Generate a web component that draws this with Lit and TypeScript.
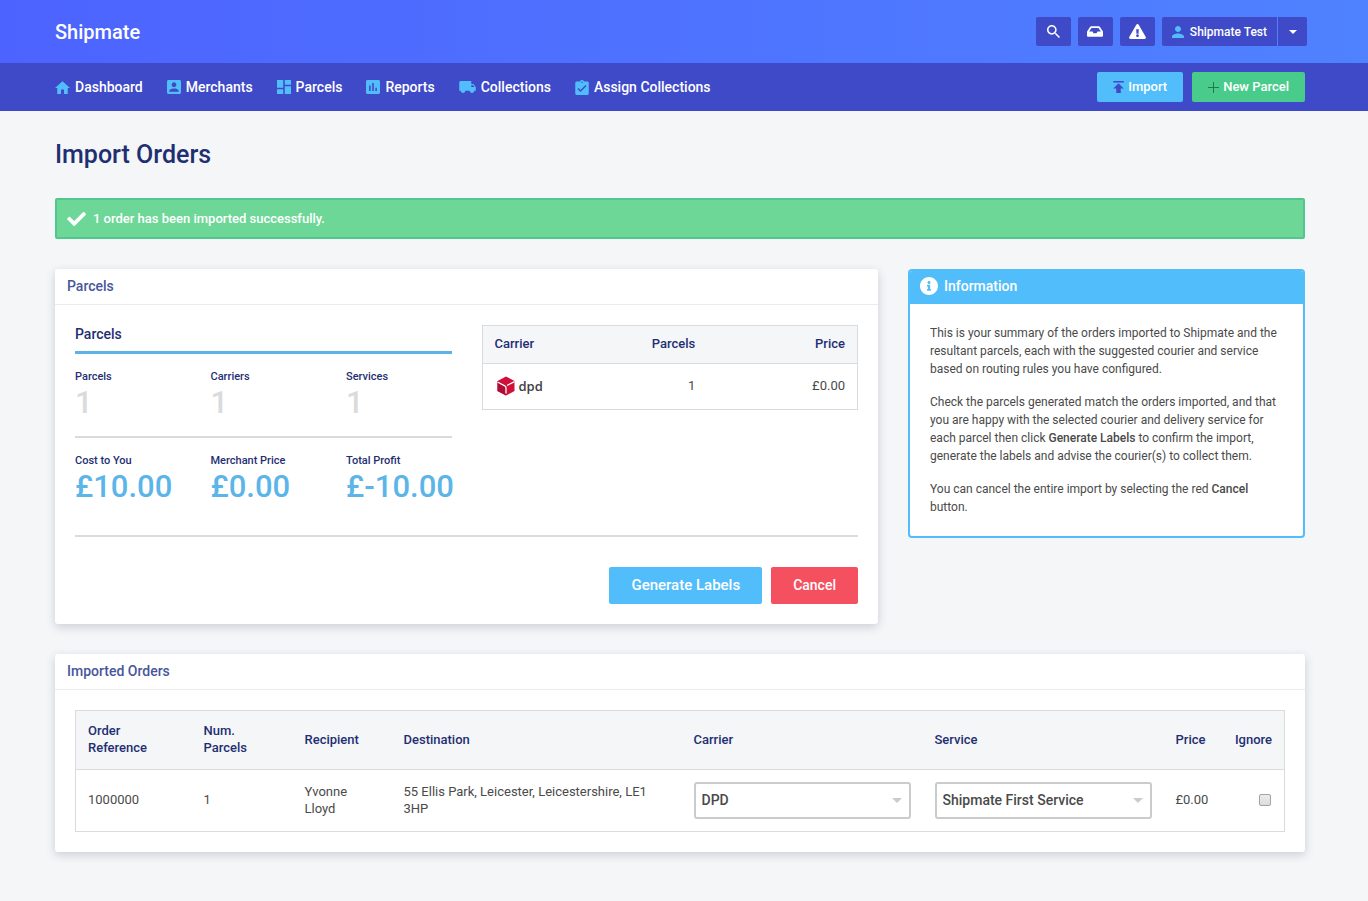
import { LitElement, html, css, svg } from "lit";
import { customElement, property, state } from "lit/decorators.js";

type IconDef = { box: string; w: number; h: number; d: string };

const ICONS: Record<string, IconDef> = {
  search: { box: "3 3 17.5 17.5", w: 13, h: 13, d: "M15.5 14h-.79l-.28-.27C15.41 12.59 16 11.11 16 9.5 16 5.91 13.09 3 9.5 3S3 5.91 3 9.5 5.91 16 9.5 16c1.61 0 3.09-.59 4.23-1.57l.27.28v.79l5 4.99L20.49 19l-4.99-5zm-6 0C7.01 14 5 11.99 5 9.5S7.01 5 9.5 5 14 7.01 14 9.5 11.99 14 9.5 14z" },
  inbox: { box: "0 64 576 384", w: 16, h: 11, d: "M567.938 243.908L462.25 85.374A48.003 48.003 0 0 0 422.311 64H153.689a48 48 0 0 0-39.938 21.374L8.062 243.908A47.994 47.994 0 0 0 0 270.533V400c0 26.51 21.49 48 48 48h480c26.51 0 48-21.49 48-48V270.533a47.994 47.994 0 0 0-8.062-26.625zM162.252 128h251.497l85.333 128H376l-32 64H232l-32-64H76.918l85.334-128z" },
  warning: { box: "0 0 576 512", w: 17, h: 15, d: "M569.517 440.013C587.975 472.007 564.806 512 527.94 512H48.054c-36.937 0-59.999-40.055-41.577-71.987L246.423 23.985c18.467-32.009 64.72-31.951 83.154 0l239.94 416.028zM288 354c-25.405 0-46 20.595-46 46s20.595 46 46 46 46-20.595 46-46-20.595-46-46-46zm-43.673-165.346l7.418 136c.347 6.364 5.609 11.346 11.982 11.346h48.546c6.373 0 11.635-4.982 11.982-11.346l7.418-136c.375-6.874-5.098-12.654-11.982-12.654h-63.383c-6.884 0-12.356 5.78-11.981 12.654z" },
  person: { box: "4 4 16 16", w: 12, h: 12, d: "M12 12c2.21 0 4-1.79 4-4s-1.79-4-4-4-4 1.79-4 4 1.79 4 4 4zm0 2c-2.67 0-8 1.34-8 4v2h16v-2c0-2.66-5.33-4-8-4z" },
  caret: { box: "0 0 8 4", w: 8, h: 4, d: "M0 0h8L4 4z" },
  arrow: { box: "0 0 10 5", w: 10, h: 5, d: "M0 0h10L5 5z" },
  home: { box: "2 3 20 17", w: 15, h: 13, d: "M10 20v-6h4v6h5v-8h3L12 3 2 12h3v8z" },
  merchant: { box: "3 3 18 18", w: 14, h: 14, d: "M3 5v14c0 1.1.89 2 2 2h14c1.1 0 2-.9 2-2V5c0-1.1-.9-2-2-2H5c-1.11 0-2 .9-2 2zm12 4c0 1.66-1.34 3-3 3s-3-1.34-3-3 1.34-3 3-3 3 1.34 3 3zm-9 8c0-2 4-3.1 6-3.1s6 1.1 6 3.1v1H6v-1z" },
  parcels: { box: "3 3 18 18", w: 14, h: 14, d: "M3 13h8V3H3v10zm0 8h8v-6H3v6zm10 0h8V11h-8v10zm0-18v6h8V3h-8z" },
  reports: { box: "3 3 18 18", w: 14, h: 14, d: "M19 3H5c-1.1 0-2 .9-2 2v14c0 1.1.9 2 2 2h14c1.1 0 2-.9 2-2V5c0-1.1-.9-2-2-2zM9 17H7v-7h2v7zm4 0h-2V7h2v10zm4 0h-2v-4h2v4z" },
  truck: { box: "1 4 22 16", w: 17, h: 12, d: "M20 8h-3V4H3c-1.1 0-2 .9-2 2v11h2c0 1.66 1.34 3 3 3s3-1.34 3-3h6c0 1.66 1.34 3 3 3s3-1.34 3-3h2v-5l-3-4zM19.500 9.500l1.96 2.5H17V9.500h2.500z" },
  assign: { box: "3 1 18 20", w: 14, h: 15, d: "M19 3h-4.18C14.4 1.84 13.3 1 12 1c-1.3 0-2.4.84-2.82 2H5c-1.1 0-2 .9-2 2v14c0 1.1.9 2 2 2h14c1.1 0 2-.9 2-2V5c0-1.1-.9-2-2-2zm-7 0c.55 0 1 .45 1 1s-.45 1-1 1-1-.45-1-1 .45-1 1-1zm-2 14l-4-4 1.41-1.41L10 14.17l6.59-6.59L18 9l-8 8z" },
  upload: { box: "5 4 14 16", w: 11, h: 12, d: "M5 4v2h14V4H5zm0 10h4v6h6v-6h4l-7-7-7 7z" },
  plus: { box: "0 0 11 11", w: 11, h: 11, d: "M5 0h1v5h5v1H6v5H5V6H0V5h5z" },
  check: { box: "0 65 512 382", w: 19, h: 14, d: "M173.898 439.404l-166.4-166.4c-9.997-9.997-9.997-26.206 0-36.204l36.203-36.204c9.997-9.998 26.207-9.998 36.204 0L192 312.69 432.095 72.596c9.997-9.997 26.207-9.997 36.204 0l36.203 36.204c9.997 9.997 9.997 26.206 0 36.204l-294.4 294.401c-9.998 9.997-26.207 9.997-36.204-.001z" },
  info: { box: "8 8 496 496", w: 18, h: 18, d: "M256 8C119.043 8 8 119.083 8 256c0 136.997 111.043 248 248 248s248-111.003 248-248C504 119.083 392.957 8 256 8zm0 110c23.196 0 42 18.804 42 42s-18.804 42-42 42-42-18.804-42-42 18.804-42 42-42zm56 254c0 6.627-5.373 12-12 12h-88c-6.627 0-12-5.373-12-12v-24c0-6.627 5.373-12 12-12h12v-64h-12c-6.627 0-12-5.373-12-12v-24c0-6.627 5.373-12 12-12h64c6.627 0 12 5.373 12 12v100h12c6.627 0 12 5.373 12 12v24z" },
};

const icon = (name: string) => {
  const i = ICONS[name];
  return html`<svg class="icon" width=${i.w} height=${i.h} viewBox=${i.box} fill="currentColor" aria-hidden="true">${svg`<path d=${i.d}></path>`}</svg>`;
};

const base = css`
  *,
  *::before,
  *::after {
    box-sizing: border-box;
  }
  .icon {
    display: block;
    flex: none;
  }
  button,
  select {
    font-family: inherit;
    margin: 0;
  }
  button {
    cursor: pointer;
    border: 0;
  }
  a {
    color: inherit;
    text-decoration: none;
  }
`;

const tableStyles = css`
  table {
    width: 100%;
    border-collapse: collapse;
    table-layout: fixed;
    border: 1px solid #d9dbdd;
    font-size: 13px;
    line-height: 17px;
  }
  th,
  td {
    padding: 0 12px 2px;
  }
  th {
    background: #f4f6f8;
    border-bottom: 1px solid #d9dbdd;
    color: #1f2f72;
    font-weight: 500;
    text-align: left;
  }
  td {
    color: #4a4a4a;
  }
  .right {
    text-align: right;
  }
`;

@customElement("top-bar")
class TopBar extends LitElement {
  static styles = [
    base,
    css`
      :host {
        display: block;
        color: #fff;
      }
      .brand-row {
        display: flex;
        align-items: center;
        justify-content: space-between;
        height: 63px;
        padding: 0 61px 0 55px;
        background: linear-gradient(90deg, #4d63ff, #4f82ff);
      }
      .brand {
        font-size: 20px;
        line-height: 28px;
        font-weight: 500;
      }
      .tools {
        display: flex;
        gap: 7px;
      }
      .tool {
        display: flex;
        align-items: center;
        justify-content: center;
        gap: 6px;
        height: 29px;
        min-width: 35px;
        padding: 0;
        border-radius: 2px;
        background: #3e4ac8;
        color: #fff;
        font-size: 12px;
        line-height: 16px;
        font-weight: 500;
      }
      .split {
        display: flex;
        gap: 1px;
      }
      .account {
        padding: 0 10px;
        border-radius: 2px 0 0 2px;
      }
      .account .icon {
        color: #52bdfb;
      }
      .more {
        min-width: 29px;
        border-radius: 0 2px 2px 0;
      }
      .nav-row {
        display: flex;
        align-items: center;
        justify-content: space-between;
        height: 48px;
        padding: 0 63px 0 55px;
        background: #3e4ac8;
      }
      nav {
        display: flex;
        gap: 24px;
      }
      .link {
        display: flex;
        align-items: center;
        gap: 5px;
        font-size: 14px;
        line-height: 20px;
        font-weight: 500;
      }
      .link .icon {
        color: #52bdfb;
      }
      .actions {
        display: flex;
        gap: 9px;
      }
      .action {
        display: flex;
        align-items: center;
        gap: 4px;
        height: 30px;
        padding: 0 16px;
        border-radius: 2px;
        color: #fff;
        font-size: 13px;
        line-height: 18px;
        font-weight: 500;
      }
      .import {
        background: #52bdfb;
      }
      .import .icon {
        color: #3e4ac8;
      }
      .new {
        background: #49cc8b;
      }
      .new .icon {
        color: #217a4d;
      }
    `,
  ];

  private links = [
    ["home", "Dashboard"],
    ["merchant", "Merchants"],
    ["parcels", "Parcels"],
    ["reports", "Reports"],
    ["truck", "Collections"],
    ["assign", "Assign Collections"],
  ];

  render() {
    return html`
      <header>
        <div class="brand-row">
          <a class="brand" href="#">Shipmate</a>
          <div class="tools">
            <button class="tool" aria-label="Search">${icon("search")}</button>
            <button class="tool" aria-label="Inbox">${icon("inbox")}</button>
            <button class="tool" aria-label="Alerts">${icon("warning")}</button>
            <div class="split">
              <button class="tool account">${icon("person")}<span>Shipmate Test</span></button>
              <button class="tool more" aria-label="Account menu">${icon("caret")}</button>
            </div>
          </div>
        </div>
        <div class="nav-row">
          <nav>
            ${this.links.map(([i, label]) => html`<a class="link" href="#">${icon(i)}<span>${label}</span></a>`)}
          </nav>
          <div class="actions">
            <button class="action import">${icon("upload")}<span>Import</span></button>
            <button class="action new">${icon("plus")}<span>New Parcel</span></button>
          </div>
        </div>
      </header>
    `;
  }
}

@customElement("panel-card")
class PanelCard extends LitElement {
  @property() heading = "";

  static styles = [
    base,
    css`
      :host {
        display: block;
        background: #fff;
        border-radius: 3px;
        box-shadow: 0 3px 10px rgba(40, 50, 80, 0.2);
      }
      .head {
        margin: 0;
        padding: 8px 12px 9px;
        border-bottom: 1px solid #e9ebed;
        color: #46579c;
        font-size: 14px;
        line-height: 18px;
        font-weight: 500;
      }
      .body {
        padding: 20px;
      }
    `,
  ];

  render() {
    return html`<h2 class="head">${this.heading}</h2>
      <div class="body"><slot></slot></div>`;
  }
}

@customElement("parcel-summary")
class ParcelSummary extends LitElement {
  static styles = [
    base,
    tableStyles,
    css`
      :host {
        display: block;
      }
      .columns {
        display: grid;
        grid-template-columns: minmax(0, 1fr) minmax(0, 1fr);
        align-items: start;
        gap: 30px;
        padding-bottom: 30px;
        border-bottom: 2px solid #d9dbdd;
      }
      .title {
        margin: 0;
        padding-bottom: 8px;
        border-bottom: 3px solid #5cb3e4;
        color: #1f2f72;
        font-size: 14px;
        line-height: 18px;
        font-weight: 500;
      }
      .stats {
        display: grid;
        grid-template-columns: repeat(3, minmax(0, 1fr));
        gap: 30px;
        margin: 0;
        padding-top: 15px;
      }
      .stats.ruled {
        padding-bottom: 15px;
        border-bottom: 2px solid #d9dbdd;
      }
      .label {
        color: #1f2f72;
        font-size: 11px;
        line-height: 16px;
        font-weight: 500;
      }
      .value {
        margin: 0;
        color: #5cb5e8;
        font-size: 31px;
        line-height: 36px;
        font-weight: 500;
        white-space: nowrap;
      }
      .muted {
        color: #d9dbdd;
      }
      th {
        height: 38px;
      }
      td {
        height: 46px;
      }
      .c-third {
        width: 30%;
      }
      .c-price {
        width: 40%;
      }
      .dpd {
        display: flex;
        align-items: center;
        gap: 4px;
        padding-left: 2px;
        color: #414042;
        font-family: "Open Sans", sans-serif;
        font-size: 13px;
        line-height: 16px;
        font-weight: 600;
      }
      .buttons {
        display: flex;
        justify-content: flex-end;
        gap: 9px;
        padding-top: 30px;
      }
      .btn {
        height: 37px;
        padding: 0 22px 2px;
        border-radius: 2px;
        color: #fff;
        font-size: 15px;
        line-height: 18px;
        font-weight: 500;
      }
      .primary {
        background: #52bdfb;
      }
      .danger {
        background: #f55060;
        font-size: 14px;
      }
    `,
  ];

  private stat(label: string, value: string, muted = false) {
    return html`<div>
      <dt class="label">${label}</dt>
      <dd class="value ${muted ? "muted" : ""}">${value}</dd>
    </div>`;
  }

  render() {
    return html`
      <div class="columns">
        <section>
          <h3 class="title">Parcels</h3>
          <dl class="stats ruled">
            ${this.stat("Parcels", "1", true)} ${this.stat("Carriers", "1", true)} ${this.stat("Services", "1", true)}
          </dl>
          <dl class="stats">
            ${this.stat("Cost to You", "£10.00")} ${this.stat("Merchant Price", "£0.00")}
            ${this.stat("Total Profit", "£-10.00")}
          </dl>
        </section>
        <table>
          <colgroup>
            <col class="c-third" />
            <col class="c-third" />
            <col class="c-price" />
          </colgroup>
          <thead>
            <tr>
              <th scope="col">Carrier</th>
              <th scope="col" class="right">Parcels</th>
              <th scope="col" class="right">Price</th>
            </tr>
          </thead>
          <tbody>
            <tr>
              <td>
                <span class="dpd">
                  <svg class="icon" width="18" height="20" viewBox="0 0 18 20" aria-hidden="true">
                    <path fill="#d0103a" d="M9 .5 17.500 5v10L9 19.500.5 15V5z"></path>
                    <path fill="#b00c34" d="M.5 5 9 9.500v10L.5 15z"></path>
                    <path fill="none" stroke="#fff" stroke-width="1.300" d="M.5 6 7.800 9.900Q9 10.500 9 12v5.500M10.200 9.300 17.500 5.600"></path>
                  </svg>
                  <span>dpd</span>
                </span>
              </td>
              <td class="right">1</td>
              <td class="right">£0.00</td>
            </tr>
          </tbody>
        </table>
      </div>
      <div class="buttons">
        <button class="btn primary">Generate Labels</button>
        <button class="btn danger">Cancel</button>
      </div>
    `;
  }
}

@customElement("info-panel")
class InfoPanel extends LitElement {
  static styles = [
    base,
    css`
      :host {
        display: block;
        border: 2px solid #52bdfb;
        border-radius: 4px;
        background: #fff;
        overflow: hidden;
      }
      .head {
        display: flex;
        align-items: center;
        gap: 6px;
        height: 33px;
        margin: 0;
        padding: 0 10px 3px;
        background: #52bdfb;
        color: #fff;
        font-size: 14px;
        line-height: 18px;
        font-weight: 500;
      }
      .text {
        display: grid;
        gap: 15px;
        padding: 20px;
        color: #4a4a4a;
        font-size: 12px;
        line-height: 18px;
      }
      p {
        margin: 0;
      }
      b {
        font-weight: 500;
      }
    `,
  ];

  render() {
    return html`
      <h2 class="head">${icon("info")}<span>Information</span></h2>
      <div class="text">
        <p>
          This is your summary of the orders imported to Shipmate and the resultant parcels, each with the suggested
          courier and service based on routing rules you have configured.
        </p>
        <p>
          Check the parcels generated match the orders imported, and that you are happy with the selected courier and
          delivery service for each parcel then click <b>Generate Labels</b> to confirm the import, generate the labels
          and advise the courier(s) to collect them.
        </p>
        <p>You can cancel the entire import by selecting the red <b>Cancel</b> button.</p>
      </div>
    `;
  }
}

@customElement("orders-table")
class OrdersTable extends LitElement {
  @state() private ignored = false;

  static styles = [
    base,
    tableStyles,
    css`
      :host {
        display: block;
      }
      th {
        height: 59px;
      }
      td {
        height: 62px;
      }
      .field {
        padding-bottom: 0;
      }
      .c-ref {
        width: 116px;
      }
      .c-num {
        width: 101px;
      }
      .c-name {
        width: 99px;
      }
      .c-select {
        width: 241px;
      }
      .c-price {
        width: 57px;
      }
      .c-ignore {
        width: 64px;
      }
      .picker {
        display: grid;
        grid-template-columns: minmax(0, 1fr) auto;
        align-items: center;
        color: #c9cbcd;
      }
      .picker select {
        grid-area: 1 / 1 / 2 / 3;
        appearance: none;
        width: 100%;
        height: 37px;
        padding: 0 24px 1px 6px;
        border: 2px solid #c9cbcd;
        border-radius: 3px;
        background: #fff;
        color: #4a4a4a;
        font-size: 14px;
        line-height: 18px;
        font-weight: 500;
      }
      .picker .icon {
        grid-area: 1 / 2 / 2 / 3;
        margin-right: 9px;
        pointer-events: none;
        z-index: 1;
      }
      .tick {
        appearance: none;
        display: block;
        width: 12px;
        height: 12px;
        margin: 0 1px 0 auto;
        border: 1px solid #a3a3a3;
        border-radius: 2px;
        background: linear-gradient(#ececec, #dcdcdc);
      }
      .tick:checked {
        background: #52bdfb;
      }
    `,
  ];

  private picker(label: string, options: string[]) {
    return html`<div class="picker">
      <select aria-label=${label}>
        ${options.map((o) => html`<option>${o}</option>`)}
      </select>
      ${icon("arrow")}
    </div>`;
  }

  render() {
    return html`
      <table>
        <colgroup>
          <col class="c-ref" />
          <col class="c-num" />
          <col class="c-name" />
          <col />
          <col class="c-select" />
          <col class="c-select" />
          <col class="c-price" />
          <col class="c-ignore" />
        </colgroup>
        <thead>
          <tr>
            <th scope="col">Order Reference</th>
            <th scope="col">Num. Parcels</th>
            <th scope="col">Recipient</th>
            <th scope="col">Destination</th>
            <th scope="col">Carrier</th>
            <th scope="col">Service</th>
            <th scope="col">Price</th>
            <th scope="col" class="right">Ignore</th>
          </tr>
        </thead>
        <tbody>
          <tr>
            <td>1000000</td>
            <td>1</td>
            <td>Yvonne Lloyd</td>
            <td>55 Ellis Park, Leicester, Leicestershire, LE1 3HP</td>
            <td class="field">${this.picker("Carrier", ["DPD"])}</td>
            <td class="field">${this.picker("Service", ["Shipmate First Service"])}</td>
            <td>£0.00</td>
            <td>
              <input
                class="tick"
                type="checkbox"
                aria-label="Ignore order 1000000"
                .checked=${this.ignored}
                @change=${(e: Event) => (this.ignored = (e.target as HTMLInputElement).checked)}
              />
            </td>
          </tr>
        </tbody>
      </table>
    `;
  }
}

@customElement("app-root")
class AppRoot extends LitElement {
  static styles = [
    base,
    css`
      :host {
        display: block;
        min-height: 100vh;
        background: #f4f6f8;
        font-family: Roboto, "Liberation Sans", sans-serif;
      }
      main {
        padding: 28px 63px 49px 55px;
      }
      h1 {
        margin: 0 0 27px;
        color: #1f2f72;
        font-size: 25px;
        line-height: 32px;
        font-weight: 500;
      }
      .alert {
        display: flex;
        align-items: center;
        gap: 7px;
        height: 41px;
        padding: 0 10px;
        border: 2px solid #52c68c;
        border-radius: 2px;
        background: #6dd797;
        color: #fff;
        font-size: 13px;
        line-height: 18px;
        font-weight: 500;
      }
      .row {
        display: grid;
        grid-template-columns: minmax(0, 823fr) minmax(0, 397fr);
        align-items: start;
        gap: 30px;
        margin: 30px 0;
      }
    `,
  ];

  render() {
    return html`
      <top-bar></top-bar>
      <main>
        <h1>Import Orders</h1>
        <div class="alert" role="status">${icon("check")}<span>1 order has been imported successfully.</span></div>
        <div class="row">
          <panel-card heading="Parcels"><parcel-summary></parcel-summary></panel-card>
          <info-panel></info-panel>
        </div>
        <panel-card heading="Imported Orders"><orders-table></orders-table></panel-card>
      </main>
    `;
  }
}
